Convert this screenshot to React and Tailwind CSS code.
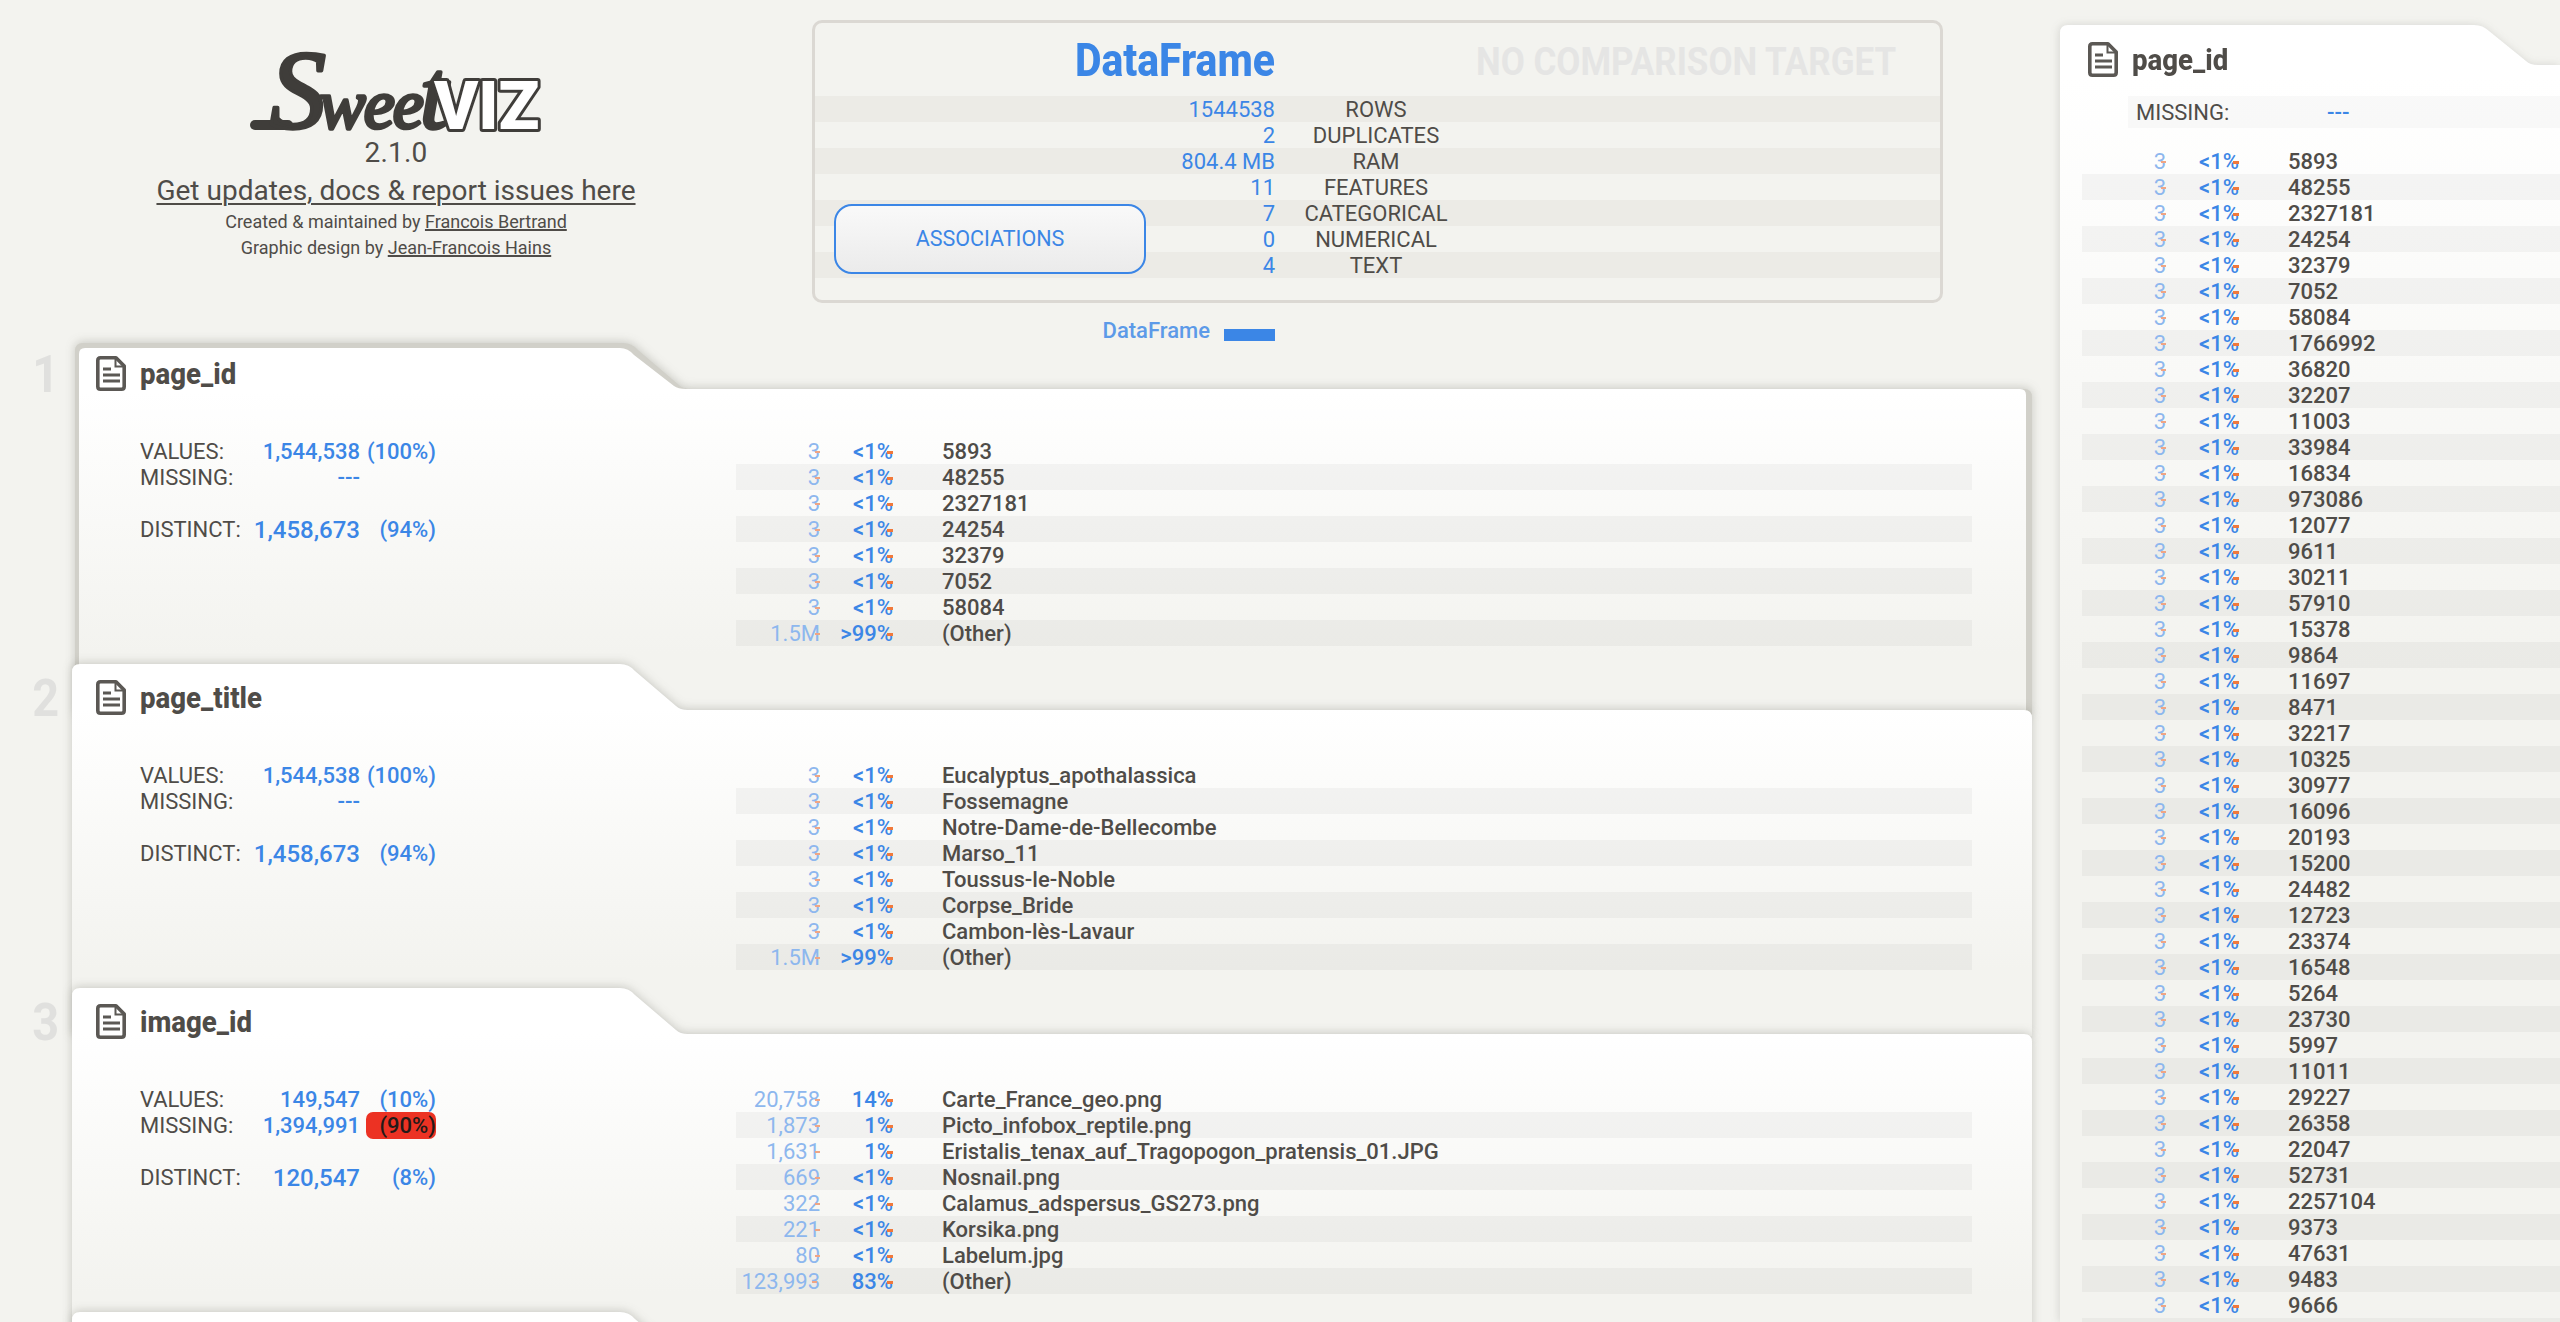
const blue = "text-[#3b86e6]";

function DocIcon() {
  return (
    <svg width="30" height="35" viewBox="0 0 30 35" fill="none" className="shrink-0">
      <path d="M4.5 1.8H20L28.2 10V30.5Q28.2 33.2 25.5 33.2H4.5Q1.8 33.2 1.8 30.5V4.5Q1.8 1.8 4.5 1.8Z" stroke="#5b5854" strokeWidth="3.6" strokeLinejoin="round" />
      <path d="M19.5 2V10.5H28" stroke="#5b5854" strokeWidth="2" />
      <path d="M7 13H15M7 19H24M7 25H24" stroke="#5b5854" strokeWidth="3.2" />
    </svg>
  );
}

function Logo() {
  return (
    <svg width="300" height="86" viewBox="0 0 300 86" className="mx-auto block overflow-visible">
      <path d="M9 75H42" stroke="#3f3d3a" strokeWidth="10" strokeLinecap="round" fill="none" />
      <text x="24" y="78" fill="#3f3d3a" stroke="#3f3d3a" strokeWidth="3.5" strokeLinejoin="round" fontFamily="'Liberation Serif', serif" fontStyle="italic" fontWeight="400" fontSize="70" letterSpacing="-2">
        <tspan fontSize="112">S</tspan>
        <tspan dx="-5">wee</tspan>
        <tspan fontSize="100" dx="-2">t</tspan>
      </text>
      <text x="188" y="79" fontFamily="Roboto, sans-serif" fontSize="67" fontWeight="900" fill="#ffffff" stroke="#3f3d3a" strokeWidth="6" strokeLinejoin="round" paintOrder="stroke">VIZ</text>
    </svg>
  );
}

const summary = [
  ["1544538", "ROWS"],
  ["2", "DUPLICATES"],
  ["804.4 MB", "RAM"],
  ["11", "FEATURES"],
  ["7", "CATEGORICAL"],
  ["0", "NUMERICAL"],
  ["4", "TEXT"],
];

function Header() {
  return (
    <div className="flex h-[340px]">
      <div className="w-[792px] shrink-0 pt-[50px] text-center">
        <Logo />
        <div className="mt-px text-[28px] leading-[32px] tracking-[0.2px]">2.1.0</div>
        <div className="mt-[6px] text-[28px] leading-[32px] underline decoration-2 underline-offset-[3px]">Get updates, docs &amp; report issues here</div>
        <div className="mt-[2px] text-[18px] leading-[26px]">
          Created &amp; maintained by <span className="underline decoration-2">Francois Bertrand</span>
        </div>
        <div className="text-[18px] leading-[26px]">
          Graphic design by <span className="underline decoration-2">Jean-Francois Hains</span>
        </div>
      </div>
      <div className="ml-[20px] pt-[20px]">
        <div className="relative h-[283px] w-[1131px] rounded-[10px] border-[3px] border-[#dbd8d3]">
          <div className="flex h-[73px] items-center">
            <div className={`w-[460px] origin-right scale-x-[0.89] text-right text-[46px] font-extrabold leading-[46px] ${blue}`}>DataFrame</div>
            <div className="ml-[201px] origin-left translate-y-[2px] scale-x-[0.92] whitespace-nowrap text-[38px] font-bold leading-[46px] text-[#e5e5e4]">NO COMPARISON TARGET</div>
          </div>
          {summary.map(([v, l], i) => (
            <div key={l} className={`flex h-[26px] items-center pt-px leading-[26px] ${i % 2 === 0 ? "bg-[#ecebe6]" : ""}`}>
              <div className={`w-[460px] text-right ${blue}`}>{v}</div>
              <div className="w-[202px] text-center">{l}</div>
            </div>
          ))}
          <button className={`absolute left-[19px] top-[181px] h-[70px] w-[312px] rounded-[18px] border-2 border-[#3b86e6] bg-gradient-to-b from-[#f9f9f9] to-[#ebebeb] text-[21.5px] ${blue}`}>ASSOCIATIONS</button>
        </div>
        <div className="mt-[18px] flex h-[20px] w-[463px] items-center justify-end gap-[14px]">
          <span className="text-[22px] font-medium leading-[20px] text-[#5c9ae8]">DataFrame</span>
          <span className="mt-[7px] h-[12px] w-[51px] bg-[#3b86e6]" />
        </div>
      </div>
    </div>
  );
}

function Row({ c, p, n, band }) {
  const wide = c.length > 6;
  return (
    <div className={`flex h-[26px] items-center pt-px leading-[26px] ${band ? "bg-black/[0.035]" : ""}`}>
      <div className={`relative w-[84px] text-right text-[#8db7ee] ${wide ? "-mr-[3px]" : ""}`}>
        {c}
        <span className={`absolute top-[12px] h-[2px] w-[5px] bg-[#f0a583] ${wide ? "right-[3px]" : "right-0"}`} />
      </div>
      <div className={`relative w-[73px] text-right font-medium ${blue} ${wide ? "ml-[3px]" : ""}`}>
        {p}
        <span className="absolute right-0 top-[12px] h-[3px] w-[6px] bg-[#f0793b]" />
      </div>
      <div className="ml-[49px] font-medium">{n}</div>
    </div>
  );
}

const same = (names) => names.map((n) => ["3", "<1%", n]);

const cards = [
  {
    id: 1, title: "page_id", selected: true,
    v: ["1,544,538", "(100%)"], m: ["---", ""], d: ["1,458,673", "(94%)"],
    rows: [...same(["5893", "48255", "2327181", "24254", "32379", "7052", "58084"]), ["1.5M", ">99%", "(Other)"]],
  },
  {
    id: 2, title: "page_title",
    v: ["1,544,538", "(100%)"], m: ["---", ""], d: ["1,458,673", "(94%)"],
    rows: [...same(["Eucalyptus_apothalassica", "Fossemagne", "Notre-Dame-de-Bellecombe", "Marso_11", "Toussus-le-Noble", "Corpse_Bride", "Cambon-lès-Lavaur"]), ["1.5M", ">99%", "(Other)"]],
  },
  {
    id: 3, title: "image_id",
    v: ["149,547", "(10%)"], m: ["1,394,991", "(90%)"], red: true, d: ["120,547", "(8%)"],
    rows: [
      ["20,758", "14%", "Carte_France_geo.png"],
      ["1,873", "1%", "Picto_infobox_reptile.png"],
      ["1,631", "1%", "Eristalis_tenax_auf_Tragopogon_pratensis_01.JPG"],
      ["669", "<1%", "Nosnail.png"],
      ["322", "<1%", "Calamus_adspersus_GS273.png"],
      ["221", "<1%", "Korsika.png"],
      ["80", "<1%", "Labelum.jpg"],
      ["123,993", "83%", "(Other)"],
    ],
  },
  { id: 4, title: "", rows: [] },
];

function Stat({ label, a, b, big, red }) {
  return (
    <div className="flex h-[26px] items-center leading-[26px]">
      <div className="w-[110px] shrink-0 pt-px">{label}</div>
      <div className={`w-[110px] shrink-0 whitespace-nowrap pt-px text-right font-medium ${blue} ${big ? "text-[24px]" : ""}`}>{a}</div>
      {b && <div className={`ml-[6px] w-[70px] rounded-[7px] pt-px text-right font-medium ${red ? "bg-[#ec3223] text-[#231a18]" : blue}`}>{b}</div>}
    </div>
  );
}

function Card({ c }) {
  return (
    <div className="flex h-[324px]">
      <div className="w-[72px] shrink-0 pr-[13px] pt-[5px]">
        {c.title && <div className="origin-right scale-x-90 text-right text-[52px] font-bold leading-[60px] text-[#e0e0de]">{c.id}</div>}
      </div>
      <div className="relative w-[1960px]">
        <div className="absolute inset-x-0 top-0 h-[372px] drop-shadow-[0_-1px_5px_rgba(70,70,60,0.25)]">
          {c.selected && (
            <div className="absolute left-[3px] top-[3px] h-[372px] w-[1957px] bg-[#d1d0c9] [clip-path:path('M8,0H548Q557,0_563,7L604,42Q608,46_616,46H1949Q1957,46_1957,54V372H0V8Q0,0_8,0Z')]" />
          )}
          <div className={`absolute h-[372px] bg-[linear-gradient(#ffffff_12%,#f3f3ef_82%)] ${c.selected ? "left-[7px] top-[8px] w-[1947px] [clip-path:path('M6,0H541Q549,0_555,7L595,38Q599,41_607,41H1941Q1947,41_1947,47V372H0V6Q0,0_6,0Z')]" : "left-0 top-0 w-[1960px] [clip-path:path('M8,0H548Q557,0_563,7L604,42Q608,46_616,46H1952Q1960,46_1960,54V372H0V8Q0,0_8,0Z')]"}`} />
        </div>
        <div className="relative">
          <div className="flex h-[98px] items-start gap-[14px] pl-[24px] pt-[16px]">
            <DocIcon />
            {c.title && <div className="origin-left translate-y-[1px] scale-x-[0.92] text-[30px] font-extrabold leading-[34px]">{c.title}</div>}
          </div>
          {c.rows.length > 0 && (
            <div className="flex">
              <div className="w-[664px] shrink-0 pl-[68px]">
                <Stat label="VALUES:" a={c.v[0]} b={c.v[1]} />
                <Stat label="MISSING:" a={c.m[0]} b={c.m[1]} red={c.red} />
                <div className="h-[26px]" />
                <Stat label="DISTINCT:" a={c.d[0]} b={c.d[1]} big />
              </div>
              <div className="mr-[60px] flex-1">
                {c.rows.map((r, i) => (
                  <Row key={i} c={r[0]} p={r[1]} n={r[2]} band={i % 2 === 1} />
                ))}
              </div>
            </div>
          )}
        </div>
      </div>
    </div>
  );
}

const detail = ["5893","48255","2327181","24254","32379","7052","58084","1766992","36820","32207","11003","33984","16834","973086","12077","9611","30211","57910","15378","9864","11697","8471","32217","10325","30977","16096","20193","15200","24482","12723","23374","16548","5264","23730","5997","11011","29227","26358","22047","52731","2257104","9373","47631","9483","9666"];

function Detail() {
  return (
    <div className="relative mt-[25px] h-[1297px] flex-1">
      <div className="absolute inset-0 drop-shadow-[-1px_0_4px_rgba(70,70,60,0.16)]">
        <div className="h-full w-full bg-[linear-gradient(#ffffff_4%,#f3f3ef_50%)] [clip-path:path('M8,0H414Q423,0_429,6L466,36Q470,40_478,40H500V1297H0V8Q0,0_8,0Z')]" />
      </div>
      <div className="relative">
        <div className="flex h-[71px] items-start gap-[14px] pl-[28px] pt-[17px]">
          <DocIcon />
          <div className="origin-left scale-x-[0.92] text-[30px] font-extrabold leading-[36px]">page_id</div>
        </div>
        <div className="ml-[68px] flex h-[32px] items-center bg-black/[0.025] pl-[8px] pt-px leading-[32px]">
          <div className="w-[191px]">MISSING:</div>
          <div className={`font-medium ${blue}`}>---</div>
        </div>
        <div className="ml-[22px] mt-[20px]">
          {detail.map((n, i) => (
            <Row key={i} c="3" p="<1%" n={n} band={i % 2 === 1} />
          ))}
          <div className="h-[26px] bg-black/[0.035]" />
        </div>
      </div>
    </div>
  );
}

export default function App() {
  return (
    <div className="flex h-[1322px] w-[2560px] overflow-hidden bg-[#f3f3ef] text-[22px] text-[#4f4c48] [font-family:Roboto,sans-serif]">
      <div className="w-[2060px] shrink-0">
        <Header />
        {cards.map((c) => (
          <Card key={c.id} c={c} />
        ))}
      </div>
      <Detail />
    </div>
  );
}
